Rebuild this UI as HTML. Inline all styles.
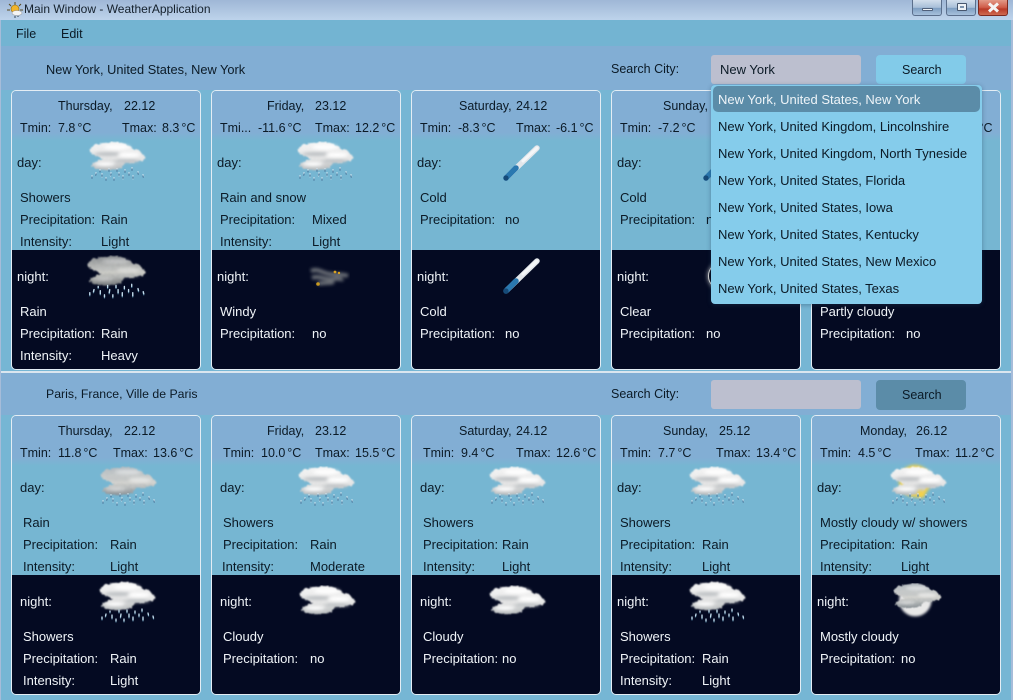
<!DOCTYPE html>
<html><head><meta charset="utf-8"><title>Main Window - WeatherApplication</title>
<style>
html,body{margin:0;padding:0}
body{width:1013px;height:700px;position:relative;overflow:hidden;background:#76b6d4;font:13px/16px "Liberation Sans",sans-serif;color:#0b1a26}
div,span,svg{position:absolute;box-sizing:border-box}
span{white-space:nowrap}
.card{width:190px;height:280px;top:90px;border:1px solid #e4edf4;border-radius:5px;overflow:hidden;background:#76b6d2}
.card i{position:absolute;display:block;left:0;right:0}
.card .u{top:0;height:50px;background:linear-gradient(#82aed4 0,#82aed4 42px,#76b6d2 50px)}
.card .n{top:159px;bottom:0;background:#040a22}
.r2{left:0;top:325px;width:1013px;height:375px}
.a{top:98px;font-size:12.5px}.b{top:120px;font-size:12.5px;word-spacing:-1.5px}.c{top:155px}.d{top:190px}.e{top:212px}.f{top:234px}
.g,.h,.j,.k{color:#f0f4f8}.g{top:269px}.h{top:304px}.j{top:326px}.k{top:348px}
.it{left:718px;color:#0b1a26}
.pop{left:711px;top:85px;width:271px;height:219px;background:#85cceb;border-radius:4px;box-shadow:0 1px 5px rgba(30,60,90,.4)}
.row{left:2px;width:267px;height:26px;border-radius:5px;background:#85cceb}
.btn{width:30px;height:16px;top:0;border:1px solid #5b6f8c;border-top:0;border-radius:0 0 3px 3px;background:linear-gradient(#d2deec,#a8bfd8 50%,#7f9fc2 55%,#a6c0dc)}
</style></head><body>
<svg width="0" height="0" style="left:0;top:0">
<defs>
<linearGradient id="w" gradientUnits="userSpaceOnUse" x1="0" y1="0" x2="0" y2="30"><stop offset="0" stop-color="#f6f6f6"/><stop offset=".6" stop-color="#e4e4e4"/><stop offset="1" stop-color="#b4b8ba"/></linearGradient>
<linearGradient id="y" gradientUnits="userSpaceOnUse" x1="0" y1="0" x2="0" y2="30"><stop offset="0" stop-color="#b0b8be"/><stop offset=".55" stop-color="#d4d4d0"/><stop offset="1" stop-color="#848c92"/></linearGradient>
<linearGradient id="z" gradientUnits="userSpaceOnUse" x1="0" y1="0" x2="0" y2="30"><stop offset="0" stop-color="#84888c"/><stop offset=".55" stop-color="#cdcdc8"/><stop offset="1" stop-color="#6c7074"/></linearGradient>
<filter id="bl" x="-15%" y="-25%" width="130%" height="150%"><feTurbulence type="fractalNoise" baseFrequency=".35" numOctaves="2" seed="3" result="t"/><feDisplacementMap in="SourceGraphic" in2="t" scale="3.5" xChannelSelector="R" yChannelSelector="G"/><feGaussianBlur stdDeviation=".7"/></filter>
<filter id="sf" x="-40%" y="-60%" width="180%" height="220%"><feGaussianBlur stdDeviation="1.5"/></filter>
<filter id="gl" x="-40%" y="-40%" width="180%" height="180%"><feGaussianBlur stdDeviation="1.6"/></filter>
<path id="sil" d="M3 9C5 4 14 1 25 1 34 1 42 3 46 8 52 9 57 13 59 17 55 21 46 22 38 22 36 26 32 29 26 29 16 30 6 28 4 24 6 21 12 19 16 18 10 16 4 13 3 9Z"/>
<g id="shade" filter="url(#sf)"><ellipse cx="21" cy="13" rx="14" ry="1.8" fill="#b8bcbf"/><ellipse cx="40" cy="20" rx="13" ry="1.6" fill="#bcc0c3"/><ellipse cx="30" cy="6" rx="13" ry="2.4" fill="#fff"/><ellipse cx="42" cy="14" rx="11" ry="2.4" fill="#fff"/><ellipse cx="18" cy="23" rx="10" ry="2" fill="#fff"/></g>
<g id="cw"><use href="#sil" fill="url(#w)" filter="url(#bl)"/><use href="#shade"/></g>
<g id="cy"><use href="#sil" fill="url(#y)" filter="url(#bl)"/><use href="#shade" opacity=".45"/></g>
<g id="cz"><use href="#sil" fill="url(#z)" filter="url(#bl)"/><use href="#shade" opacity=".35"/></g>
<path id="dp" fill="none" stroke-width="1.3" stroke-linecap="round" d="M5 36v2M9 33l-.5 2M15 34v3M19 38v2M24 33l-.5 3M27 38v2M32 33v3M36 36v3M42 33v2M46 36v3M51 32l.5 2M56 35l.5 2M30 29v2M38 30v2M45 28v2M13 30v1M22 29v2"/>
<g id="dd"><use href="#dp" stroke="#d4e6f0" transform="translate(0,-1.2)"/><use href="#dp" stroke="#4f80a4" stroke-dasharray="1.2 5" /></g>
<g id="dn"><use href="#dp" stroke="#3f6a88" transform="translate(0,1)"/><use href="#dp" stroke="#c4dcec"/></g>
<g id="th"><path d="M6 35 36 6" stroke="#e2e6ea" stroke-width="5.5" stroke-linecap="round"/><path d="M36 6 22 19" stroke="#f4f6f8" stroke-width="3" stroke-linecap="round"/><path d="M5 36 15 26" stroke="#2a78b0" stroke-width="5.5" stroke-linecap="round"/><circle cx="5" cy="36" r="2.6" fill="#164a78"/></g>
</defs>
</svg>

<div style="left:0;top:0;width:1013px;height:20px;background:linear-gradient(#9fb7d6,#bdd3eb)"></div>
<svg style="left:6px;top:1px" width="18" height="18" viewBox="0 0 18 18"><g stroke="#5a4a20" stroke-width="1"><path d="M9 1v3M3 3l2 2M15 3l-2 2M1 9h3M14 9h3"/></g><circle cx="9" cy="8" r="4" fill="#f2b52c" stroke="#8a6a18" stroke-width=".6"/><ellipse cx="11" cy="12" rx="5" ry="2.5" fill="#f4f4f4" stroke="#777" stroke-width=".4"/><path d="M9 15v2M12 15v1" stroke="#345" stroke-width="1"/></svg>
<span style="left:24px;top:1px;color:#14202c;font-size:12px">Main Window - WeatherApplication</span>
<div class="btn" style="left:912px"><div style="left:9px;top:8px;width:11px;height:3px;background:#eef2f6;border:1px solid #50607a;border-radius:1px"></div></div>
<div class="btn" style="left:946px"><div style="left:10px;top:3px;width:10px;height:8px;background:#eef2f6;border:1px solid #46566e;border-radius:1px"></div><div style="left:13px;top:6px;width:4px;height:2px;background:#7c93ae"></div></div>
<div class="btn" style="left:978px;border-color:#7c2a20;background:linear-gradient(#e29a88,#cf5b48 50%,#b83a28 60%,#cf6a50)"><svg style="left:8px;top:2px" width="13" height="11" viewBox="0 0 13 11"><path d="M2 1.5 11 9.5M11 1.5 2 9.5" stroke="#f4f4f4" stroke-width="3"/></svg></div>

<div style="left:0;top:20px;width:1013px;height:26px;background:#73b4d2"></div>
<span style="left:16px;top:26px;font-size:12.5px">File</span><span style="left:61px;top:26px;font-size:12.5px">Edit</span>
<div style="left:0;top:46px;width:1013px;height:44px;background:#82aed4"></div>
<span style="left:46px;top:62px;font-size:12.8px">New York, United States, New York</span>
<span style="left:611px;top:61px;font-size:12.5px">Search City:</span>
<div style="left:711px;top:55px;width:150px;height:29px;background:#bcbfcf;border-radius:3px"></div>
<span style="left:720px;top:62px">New York</span>
<div style="left:876px;top:55px;width:90px;height:29px;background:#82cbe9;border-radius:4px"></div>
<span style="left:902px;top:62px;font-size:12.5px">Search</span>

<div class="card" style="left:11px"><i class="u"></i><i class="n"></i></div>
<div class="card" style="left:211px"><i class="u"></i><i class="n"></i></div>
<div class="card" style="left:411px"><i class="u"></i><i class="n"></i></div>
<div class="card" style="left:611px"><i class="u"></i><i class="n"></i></div>
<div class="card" style="left:811px"><i class="u"></i><i class="n"></i></div>

<span class="a" style="left:58px">Thursday,</span><span class="a" style="left:124px">22.12</span>
<span class="b" style="left:20px">Tmin:</span><span class="b" style="left:58px">7.8 °C</span><span class="b" style="left:122px">Tmax:</span><span class="b" style="left:162px">8.3 °C</span>
<span class="c" style="left:17px">day:</span>
<svg style="left:87px;top:141px" width="60" height="42" viewBox="0 0 60 42"><use href="#cw"/><use href="#dd"/></svg>
<span class="d" style="left:20px">Showers</span>
<span class="e" style="left:20px">Precipitation:</span><span class="e" style="left:101px">Rain</span>
<span class="f" style="left:20px">Intensity:</span><span class="f" style="left:101px">Light</span>
<span class="g" style="left:17px">night:</span>
<svg style="left:82px;top:255px" width="68" height="44" viewBox="0 0 60 42"><use href="#cz"/><use href="#dn"/></svg>
<span class="h" style="left:20px">Rain</span>
<span class="j" style="left:20px">Precipitation:</span><span class="j" style="left:101px">Rain</span>
<span class="k" style="left:20px">Intensity:</span><span class="k" style="left:101px">Heavy</span>

<span class="a" style="left:267px">Friday,</span><span class="a" style="left:315px">23.12</span>
<span class="b" style="left:220px">Tmi...</span><span class="b" style="left:258px">-11.6 °C</span><span class="b" style="left:315px">Tmax:</span><span class="b" style="left:355px">12.2 °C</span>
<span class="c" style="left:217px">day:</span>
<svg style="left:295px;top:141px" width="60" height="42" viewBox="0 0 60 42"><use href="#cw"/><use href="#dd"/></svg>
<span class="d" style="left:220px">Rain and snow</span>
<span class="e" style="left:220px">Precipitation:</span><span class="e" style="left:312px">Mixed</span>
<span class="f" style="left:220px">Intensity:</span><span class="f" style="left:312px">Light</span>
<span class="g" style="left:217px">night:</span>
<svg style="left:308px;top:265px" width="42" height="23" viewBox="0 0 42 23"><g filter="url(#sf)" fill="none" stroke="#6a6e76" stroke-width="4"><path d="M3 6C10 3 14 8 22 9 30 10 35 9 40 11"/><path d="M4 13C10 10 16 15 26 14 31 13 33 15 35 14"/><path d="M10 19C14 17 20 19 26 17"/></g><circle cx="27" cy="7" r="1.4" fill="#d8a020"/><circle cx="31" cy="8" r="1.2" fill="#d8a020"/><circle cx="10" cy="19" r="1.8" fill="#c89a20"/></svg>
<span class="h" style="left:220px">Windy</span>
<span class="j" style="left:220px">Precipitation:</span><span class="j" style="left:312px">no</span>

<span class="a" style="left:459px">Saturday,</span><span class="a" style="left:516px">24.12</span>
<span class="b" style="left:420px">Tmin:</span><span class="b" style="left:458px">-8.3 °C</span><span class="b" style="left:516px">Tmax:</span><span class="b" style="left:556px">-6.1 °C</span>
<span class="c" style="left:417px">day:</span>
<svg style="left:501px;top:142px" width="40" height="40" viewBox="0 0 40 40"><use href="#th"/></svg>
<span class="d" style="left:420px">Cold</span>
<span class="e" style="left:420px">Precipitation:</span><span class="e" style="left:505px">no</span>
<span class="g" style="left:417px">night:</span>
<svg style="left:501px;top:255px" width="40" height="40" viewBox="0 0 40 40"><use href="#th"/></svg>
<span class="h" style="left:420px">Cold</span>
<span class="j" style="left:420px">Precipitation:</span><span class="j" style="left:505px">no</span>

<span class="a" style="left:663px">Sunday,</span>
<span class="b" style="left:620px">Tmin:</span><span class="b" style="left:658px">-7.2 °C</span>
<span class="c" style="left:617px">day:</span>
<svg style="left:701px;top:142px" width="40" height="40" viewBox="0 0 40 40"><use href="#th"/></svg>
<span class="d" style="left:620px">Cold</span>
<span class="e" style="left:620px">Precipitation:</span><span class="e" style="left:706px">no</span>
<span class="g" style="left:617px">night:</span>
<div style="left:708px;top:262px;width:28px;height:28px;border-radius:50%;background:#05081a;border:1.5px solid #d8d8d8;box-shadow:0 0 5px #bbb"></div>
<span class="h" style="left:620px">Clear</span>
<span class="j" style="left:620px">Precipitation:</span><span class="j" style="left:706px">no</span>

<span class="b" style="left:955px">-5.0 °C</span>
<span class="g" style="left:817px">night:</span>
<span class="h" style="left:820px">Partly cloudy</span>
<span class="j" style="left:820px">Precipitation:</span><span class="j" style="left:906px">no</span>

<div style="left:1px;top:371px;width:1011px;height:2px;background:#dbe6ef"></div>
<div style="left:0;top:373px;width:1013px;height:42px;background:#82aed4"></div>
<span style="left:46px;top:386px;font-size:12.3px">Paris, France, Ville de Paris</span>
<span style="left:611px;top:386px;font-size:12.5px">Search City:</span>
<div style="left:711px;top:380px;width:150px;height:29px;background:#bcbfcf;border-radius:3px"></div>
<div style="left:876px;top:380px;width:90px;height:30px;background:#5b8ca8;border-radius:4px"></div>
<span style="left:902px;top:387px;font-size:12.5px">Search</span>

<div class="r2">
<div class="card" style="left:11px"><i class="u"></i><i class="n"></i></div>
<div class="card" style="left:211px"><i class="u"></i><i class="n"></i></div>
<div class="card" style="left:411px"><i class="u"></i><i class="n"></i></div>
<div class="card" style="left:611px"><i class="u"></i><i class="n"></i></div>
<div class="card" style="left:811px"><i class="u"></i><i class="n"></i></div>

<span class="a" style="left:58px">Thursday,</span><span class="a" style="left:124px">22.12</span>
<span class="b" style="left:20px">Tmin:</span><span class="b" style="left:58px">11.8 °C</span><span class="b" style="left:113px">Tmax:</span><span class="b" style="left:153px">13.6 °C</span>
<span class="c" style="left:20px">day:</span>
<svg style="left:96px;top:141px" width="64" height="42" viewBox="0 0 60 42"><use href="#cy"/><use href="#dd"/></svg>
<span class="d" style="left:23px">Rain</span>
<span class="e" style="left:23px">Precipitation:</span><span class="e" style="left:110px">Rain</span>
<span class="f" style="left:23px">Intensity:</span><span class="f" style="left:110px">Light</span>
<span class="g" style="left:20px">night:</span>
<svg style="left:97px;top:255px" width="60" height="44" viewBox="0 0 60 42"><use href="#cw"/><use href="#dn"/></svg>
<span class="h" style="left:23px">Showers</span>
<span class="j" style="left:23px">Precipitation:</span><span class="j" style="left:110px">Rain</span>
<span class="k" style="left:23px">Intensity:</span><span class="k" style="left:110px">Light</span>

<span class="a" style="left:267px">Friday,</span><span class="a" style="left:315px">23.12</span>
<span class="b" style="left:223px">Tmin:</span><span class="b" style="left:261px">10.0 °C</span><span class="b" style="left:315px">Tmax:</span><span class="b" style="left:355px">15.5 °C</span>
<span class="c" style="left:220px">day:</span>
<svg style="left:296px;top:141px" width="60" height="42" viewBox="0 0 60 42"><use href="#cw"/><use href="#dd"/></svg>
<span class="d" style="left:223px">Showers</span>
<span class="e" style="left:223px">Precipitation:</span><span class="e" style="left:310px">Rain</span>
<span class="f" style="left:222px">Intensity:</span><span class="f" style="left:310px">Moderate</span>
<span class="g" style="left:220px">night:</span>
<svg style="left:297px;top:260px" width="60" height="42" viewBox="0 0 60 42"><use href="#cw"/></svg>
<span class="h" style="left:223px">Cloudy</span>
<span class="j" style="left:223px">Precipitation:</span><span class="j" style="left:310px">no</span>

<span class="a" style="left:459px">Saturday,</span><span class="a" style="left:516px">24.12</span>
<span class="b" style="left:423px">Tmin:</span><span class="b" style="left:461px">9.4 °C</span><span class="b" style="left:516px">Tmax:</span><span class="b" style="left:556px">12.6 °C</span>
<span class="c" style="left:420px">day:</span>
<svg style="left:487px;top:141px" width="60" height="42" viewBox="0 0 60 42"><use href="#cw"/><use href="#dd"/></svg>
<span class="d" style="left:423px">Showers</span>
<span class="e" style="left:423px">Precipitation:</span><span class="e" style="left:502px">Rain</span>
<span class="f" style="left:423px">Intensity:</span><span class="f" style="left:502px">Light</span>
<span class="g" style="left:420px">night:</span>
<svg style="left:487px;top:260px" width="60" height="42" viewBox="0 0 60 42"><use href="#cw"/></svg>
<span class="h" style="left:423px">Cloudy</span>
<span class="j" style="left:423px">Precipitation:</span><span class="j" style="left:502px">no</span>

<span class="a" style="left:663px">Sunday,</span><span class="a" style="left:719px">25.12</span>
<span class="b" style="left:620px">Tmin:</span><span class="b" style="left:658px">7.7 °C</span><span class="b" style="left:716px">Tmax:</span><span class="b" style="left:756px">13.4 °C</span>
<span class="c" style="left:617px">day:</span>
<svg style="left:687px;top:141px" width="60" height="42" viewBox="0 0 60 42"><use href="#cw"/><use href="#dd"/></svg>
<span class="d" style="left:620px">Showers</span>
<span class="e" style="left:620px">Precipitation:</span><span class="e" style="left:702px">Rain</span>
<span class="f" style="left:620px">Intensity:</span><span class="f" style="left:702px">Light</span>
<span class="g" style="left:617px">night:</span>
<svg style="left:687px;top:255px" width="60" height="44" viewBox="0 0 60 42"><use href="#cw"/><use href="#dn"/></svg>
<span class="h" style="left:620px">Showers</span>
<span class="j" style="left:620px">Precipitation:</span><span class="j" style="left:702px">Rain</span>
<span class="k" style="left:620px">Intensity:</span><span class="k" style="left:702px">Light</span>

<span class="a" style="left:860px">Monday,</span><span class="a" style="left:916px">26.12</span>
<span class="b" style="left:820px">Tmin:</span><span class="b" style="left:858px">4.5 °C</span><span class="b" style="left:915px">Tmax:</span><span class="b" style="left:955px">11.2 °C</span>
<span class="c" style="left:817px">day:</span>
<svg style="left:888px;top:141px;overflow:visible" width="60" height="42" viewBox="0 0 60 42"><circle cx="27" cy="15" r="16" fill="#f4d24a" filter="url(#gl)"/><use href="#cw"/><circle cx="33" cy="28" r="4" fill="#f4d24a" filter="url(#gl)"/><use href="#dd"/></svg>
<span class="d" style="left:820px">Mostly cloudy w/ showers</span>
<span class="e" style="left:820px">Precipitation:</span><span class="e" style="left:901px">Rain</span>
<span class="f" style="left:820px">Intensity:</span><span class="f" style="left:901px">Light</span>
<span class="g" style="left:817px">night:</span>
<svg style="left:891px;top:258px" width="52" height="36" viewBox="0 0 60 42"><circle cx="28" cy="20" r="19" fill="#e8e8e8" filter="url(#gl)"/><use href="#cy"/></svg>
<span class="h" style="left:820px">Mostly cloudy</span>
<span class="j" style="left:820px">Precipitation:</span><span class="j" style="left:901px">no</span>
</div>

<div class="pop">
<div class="row" style="top:1px;background:#5b8ca8"></div>
<div class="row" style="top:28px"></div>
<div class="row" style="top:55px"></div>
<div class="row" style="top:82px"></div>
<div class="row" style="top:109px"></div>
<div class="row" style="top:136px"></div>
<div class="row" style="top:163px"></div>
<div class="row" style="top:190px"></div>
</div>
<span class="it" style="top:92px;color:#eef4f8">New York, United States, New York</span>
<span class="it" style="top:119px">New York, United Kingdom, Lincolnshire</span>
<span class="it" style="top:146px">New York, United Kingdom, North Tyneside</span>
<span class="it" style="top:173px">New York, United States, Florida</span>
<span class="it" style="top:200px">New York, United States, Iowa</span>
<span class="it" style="top:227px">New York, United States, Kentucky</span>
<span class="it" style="top:254px">New York, United States, New Mexico</span>
<span class="it" style="top:281px">New York, United States, Texas</span>

<div style="left:0;top:20px;width:1px;height:680px;background:#a6bcd9"></div>
<div style="left:1011px;top:20px;width:2px;height:680px;background:#a6bcd9"></div>
</body></html>
